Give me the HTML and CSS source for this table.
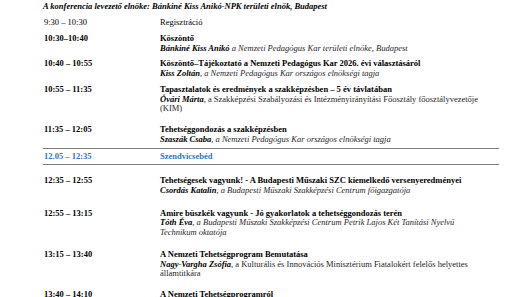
FILE: index.html
```html
<!DOCTYPE html>
<html lang="hu">
<head>
<meta charset="utf-8">
<link rel="stylesheet" href="styles.css">
</head>
<body>
<div class="page">
  <p class="chair">A konferencia levezető elnöke: Bánkiné Kiss Anikó-NPK területi elnök, Budapest</p>

  <div class="row gap-a">
    <div class="time plain">9:30 – 10:30</div>
    <div class="what"><div class="plain">Regisztráció</div></div>
  </div>

  <div class="row gap-a">
    <div class="time">10:30–10:40</div>
    <div class="what">
      <div class="title">Köszöntő</div>
      <div class="who"><b>Bánkiné Kiss Anikó</b> a Nemzeti Pedagógus Kar területi elnöke, Budapest</div>
    </div>
  </div>

  <div class="row gap-b">
    <div class="time">10:40 – 10:55</div>
    <div class="what">
      <div class="title">Köszöntő–Tájékoztató a Nemzeti Pedagógus Kar 2026. évi választásáról</div>
      <div class="who"><b>Kiss Zoltán</b>, a Nemzeti Pedagógus Kar országos elnökségi tagja</div>
    </div>
  </div>

  <div class="row gap-c">
    <div class="time">10:55 – 11:35</div>
    <div class="what">
      <div class="title">Tapasztalatok és eredmények a szakképzésben – 5 év távlatában</div>
      <div class="who upright"><b>Óvári Márta</b>, a Szakképzési Szabályozási és Intézményirányítási Főosztály főosztályvezetője (KIM)</div>
    </div>
  </div>

  <div class="row gap-d">
    <div class="time">11:35 – 12:05</div>
    <div class="what">
      <div class="title">Tehetséggondozás a szakképzésben</div>
      <div class="who"><b>Szaszák Csaba</b>, a Nemzeti Pedagógus Kar országos elnökségi tagja</div>
    </div>
  </div>

  <div class="row lunch">
    <div class="time">12.05 – 12:35</div>
    <div class="what"><div class="title">Szendvicsebéd</div></div>
  </div>

  <div class="row gap-d">
    <div class="time">12:35 – 12:55</div>
    <div class="what">
      <div class="title">Tehetségesek vagyunk! - A Budapesti Műszaki SZC kiemelkedő versenyeredményei</div>
      <div class="who"><b>Csordás Katalin</b>, a Budapesti Műszaki Szakképzési Centrum főigazgatója</div>
    </div>
  </div>

  <div class="row gap-e">
    <div class="time">12:55 – 13:15</div>
    <div class="what">
      <div class="title">Amire büszkék vagyunk - Jó gyakorlatok a tehetséggondozás terén</div>
      <div class="who"><b>Tóth Éva</b>, a Budapesti Műszaki Szakképzési Centrum Petrik Lajos Két Tanítási Nyelvű Technikum oktatója</div>
    </div>
  </div>

  <div class="row gap-e">
    <div class="time">13:15 – 13:40</div>
    <div class="what">
      <div class="title">A Nemzeti Tehetségprogram Bemutatása</div>
      <div class="who upright"><b>Nagy-Vargha Zsófia</b>, a Kulturális és Innovációs Minisztérium Fiatalokért felelős helyettes államtitkára</div>
    </div>
  </div>

  <div class="row gap-d">
    <div class="time">13:40 – 14:10</div>
    <div class="what">
      <div class="title">A Nemzeti Tehetségprogramról</div>
    </div>
  </div>
</div>
</body>
</html>
```

FILE: styles.css
```css
html, body {
  margin: 0;
  padding: 0;
  background: #ffffff;
}

body {
  font-family: "Liberation Serif", "Times New Roman", serif;
  font-size: 8.5px;
  line-height: 9.5px;
  color: #000000;
  overflow: hidden;
}

.page {
  width: 456px;
  padding: 2px 0 0 43px;
}

.chair {
  margin: 0;
  font-weight: bold;
  font-style: italic;
}

.row {
  display: grid;
  grid-template-columns: 117px 328px;
}

.gap-a { margin-top: 6.5px; }
.gap-b { margin-top: 6px; }
.gap-c { margin-top: 7px; }
.gap-d { margin-top: 11.5px; }
.gap-e { margin-top: 13.25px; }

.time {
  font-weight: bold;
  padding-left: 1px;
}

.time.plain,
.plain {
  font-weight: normal;
}

.title {
  font-weight: bold;
}

.who {
  font-style: italic;
  color: #262626;
}

.who.upright {
  font-style: normal;
}

.who b {
  font-style: italic;
  color: #000000;
}

.lunch {
  margin-top: 3.75px;
  border-top: 1px solid #7f7f7f;
  border-bottom: 1px solid #7f7f7f;
  padding: 3px 0 2.5px;
}

.lunch .title,
.lunch .time {
  color: #2e74c8;
}
```
